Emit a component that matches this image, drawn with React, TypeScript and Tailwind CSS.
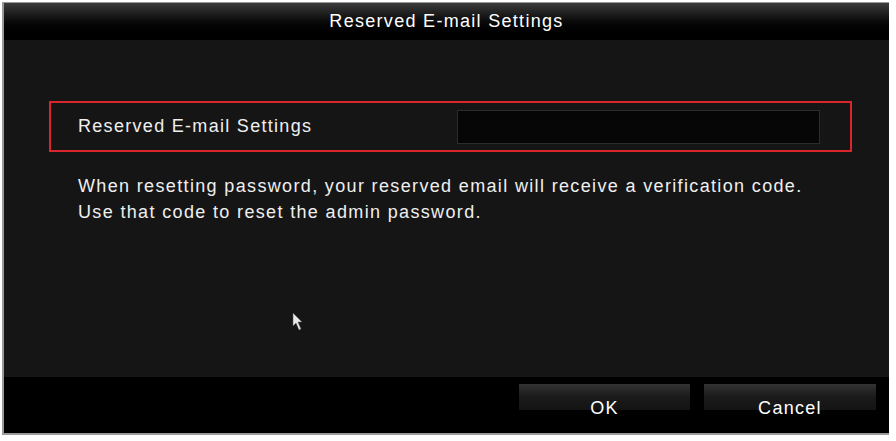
export default function App() {
  return (
    <div className="w-[896px] h-[441px] bg-white relative" style={{ fontFamily: '"Liberation Sans", Arial, sans-serif' }}>
      <div className="absolute left-[2px] top-[2px] w-[887px] h-[433px] border-l-2 border-b-2 border-t border-[#9a9a9a] flex flex-col bg-[#151515]">
        <div className="h-[37px] flex items-center justify-center text-white text-[18px] tracking-[1.3px] bg-gradient-to-b from-[#3c3c3c] via-[#0a0a0a] to-black">
          Reserved E-mail Settings
        </div>
        <div className="flex-1 relative pt-[61px] pl-[45px] pr-[37px]">
          <div className="h-[51px] border-2 border-[#d8262c] flex items-center pl-[27px] pr-[30px]">
            <span className="text-[18px] tracking-[1.3px] text-[#efefef] flex-1">Reserved E-mail Settings</span>
            <div className="w-[363px] h-[34px] bg-[#060606] border border-[#2c2c2c]" />
          </div>
          <div className="pl-[29px] pt-[21px] text-[18px] tracking-[1.35px] leading-[26px] text-[#efefef]">
            <div>When resetting password, your reserved email will receive a verification code.</div>
            <div>Use that code to reset the admin password.</div>
          </div>
          <svg className="absolute left-[287px] top-[272px]" width="14" height="20" viewBox="0 0 14 20">
            <path d="M2 1 L2 14 L5 11 L8 18 L10 17 L7 10 L11 10 Z" fill="#e8e8e8" stroke="#555" strokeWidth="0.5" />
          </svg>
        </div>
        <div className="h-[56px] bg-black flex items-start justify-end gap-[14px] pr-[13px] pt-[7px]">
          <button className="w-[171px] h-[26px] bg-gradient-to-b from-[#333] via-[#1a1a1a] to-[#141414] text-white text-[18px] tracking-[1.3px] pt-[16px] leading-[20px] flex justify-center">
            <span className="-mt-[2px]">OK</span>
          </button>
          <button className="w-[172px] h-[26px] bg-gradient-to-b from-[#333] via-[#1a1a1a] to-[#141414] text-white text-[18px] tracking-[1.3px] pt-[16px] leading-[20px] flex justify-center">
            <span className="-mt-[2px]">Cancel</span>
          </button>
        </div>
      </div>
    </div>
  );
}
